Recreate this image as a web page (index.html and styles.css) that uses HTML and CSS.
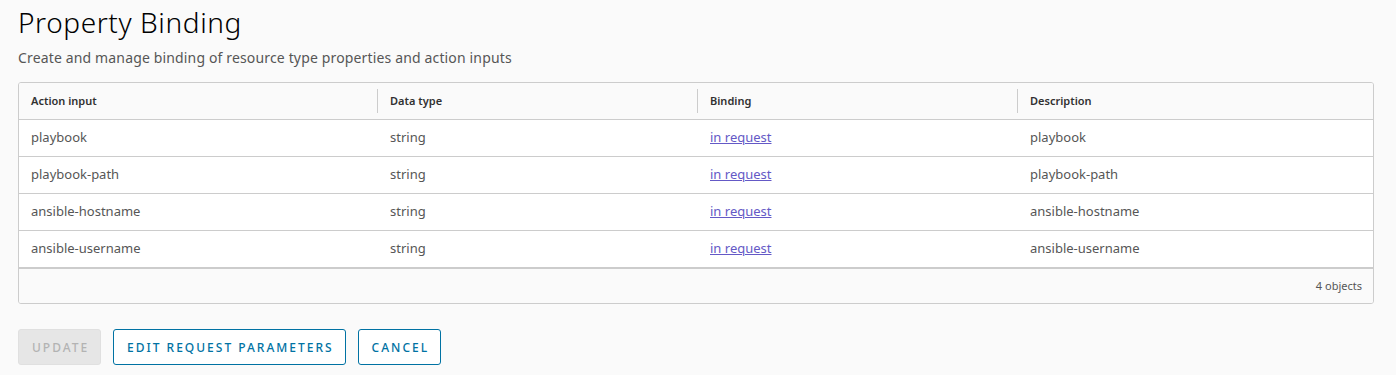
FILE: index.html
```html
<!DOCTYPE html>
<html>
<head>
<meta charset="utf-8">
<link rel="stylesheet" href="styles.css">
</head>
<body>
<div class="page">
  <h1 class="title">Property Binding</h1>
  <p class="subtitle">Create and manage binding of resource type properties and action inputs</p>
  <div class="grid">
    <div class="row head">
      <div class="cell c1">Action input</div>
      <div class="cell c2 sep">Data type</div>
      <div class="cell c3 sep">Binding</div>
      <div class="cell c4 sep">Description</div>
    </div>
    <div class="row">
      <div class="cell c1">playbook</div>
      <div class="cell c2">string</div>
      <div class="cell c3"><a href="#" class="link">in request</a></div>
      <div class="cell c4">playbook</div>
    </div>
    <div class="row">
      <div class="cell c1">playbook-path</div>
      <div class="cell c2">string</div>
      <div class="cell c3"><a href="#" class="link">in request</a></div>
      <div class="cell c4">playbook-path</div>
    </div>
    <div class="row">
      <div class="cell c1">ansible-hostname</div>
      <div class="cell c2">string</div>
      <div class="cell c3"><a href="#" class="link">in request</a></div>
      <div class="cell c4">ansible-hostname</div>
    </div>
    <div class="row last">
      <div class="cell c1">ansible-username</div>
      <div class="cell c2">string</div>
      <div class="cell c3"><a href="#" class="link">in request</a></div>
      <div class="cell c4">ansible-username</div>
    </div>
    <div class="footer">4 objects</div>
  </div>
  <div class="actions">
    <button class="btn disabled">UPDATE</button>
    <button class="btn outline">EDIT REQUEST PARAMETERS</button>
    <button class="btn outline">CANCEL</button>
  </div>
</div>
</body>
</html>
```

FILE: styles.css
```css
html, body {
  margin: 0;
  padding: 0;
  background: #fafafa;
}
body {
  font-family: "Noto Sans", "Open Sans", sans-serif;
  color: #565656;
}
.page {
  padding: 0 22px 0 18px;
}
.title {
  margin: 0;
  padding-top: 4px;
  font-size: 28px;
  font-weight: 300;
  line-height: 36px;
  letter-spacing: 0.6px;
  color: #000;
}
.subtitle {
  margin: 8px 0 0;
  font-size: 14px;
  line-height: 20px;
  letter-spacing: 0.15px;
  color: #565656;
}
.grid {
  margin-top: 14px;
  border: 1px solid #ccc;
  border-radius: 3px;
  background: #fff;
  overflow: hidden;
}
.row {
  display: grid;
  grid-template-columns: 358px 320px 320px 1fr;
  height: 37px;
  border-bottom: 1px solid #ccc;
  box-sizing: border-box;
}
.row.head {
  background: #fafafa;
}
.row.last {
  border-bottom: 2px solid #ccc;
  height: 38px;
}
.cell {
  display: flex;
  align-items: center;
  padding: 0 12px 2px;
  font-size: 13px;
  color: #565656;
  position: relative;
}
.head .cell {
  font-size: 11px;
  font-weight: 600;
  color: #313131;
}
.c2, .c3, .c4 { padding-left: 13px; }
.head .sep::before {
  content: "";
  position: absolute;
  left: 0;
  top: 6px;
  bottom: 6px;
  width: 1px;
  background: #ccc;
}
.link {
  color: #6459c6;
  text-decoration: underline;
}
.footer {
  height: 34px;
  background: #fafafa;
  display: flex;
  align-items: center;
  justify-content: flex-end;
  padding: 0 11px 1px 0;
  box-sizing: border-box;
  font-size: 11px;
  color: #565656;
}
.actions {
  display: flex;
  gap: 12px;
  margin-top: 25px;
}
.btn {
  height: 36px;
  box-sizing: border-box;
  border-radius: 3px;
  font-family: inherit;
  font-size: 12px;
  font-weight: 500;
  letter-spacing: 2px;
  padding: 0 11px 0 13px;
  background: transparent;
}
.btn.disabled {
  width: 83px;
  border: 1px solid #e0e0e0;
  background: #e6e6e6;
  color: #b3b3b3;
}
.btn.outline {
  border: 1px solid #0072a3;
  color: #0072a3;
  background: #fff;
}
```
